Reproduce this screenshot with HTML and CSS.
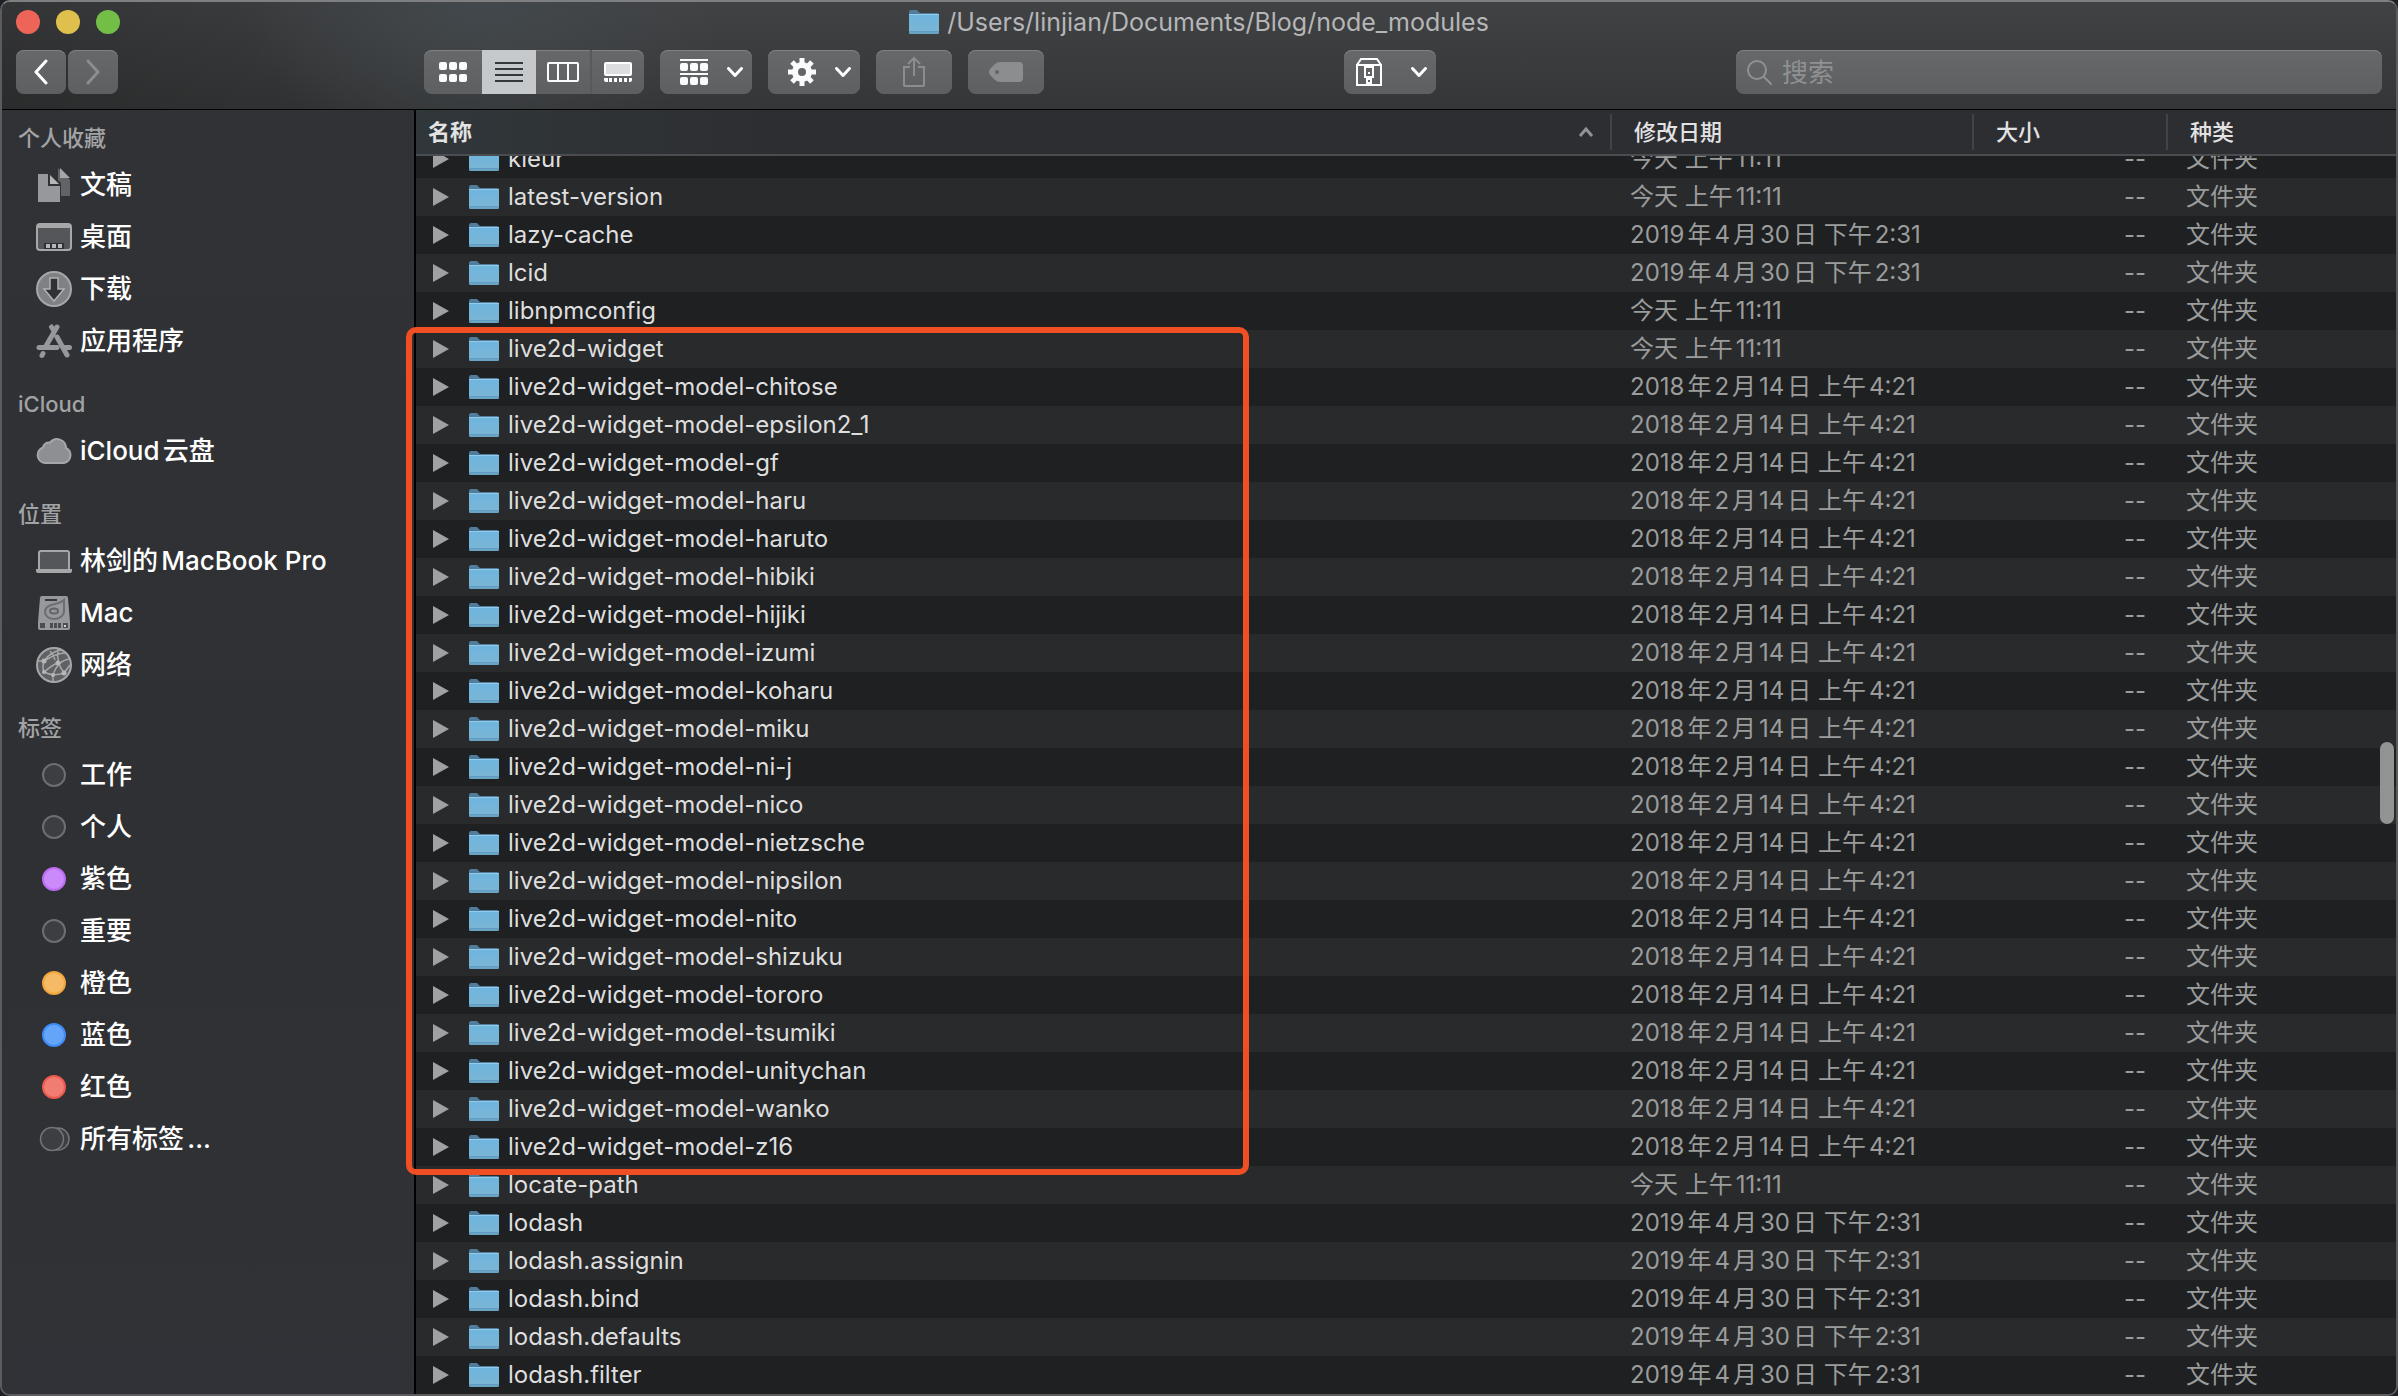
FILE: index.html
```html
<!DOCTYPE html>
<html lang="zh-CN">
<head>
<meta charset="utf-8">
<meta name="viewport" content="width=device-width, initial-scale=1">
<title>/Users/linjian/Documents/Blog/node_modules</title>
<link rel="stylesheet" href="styles.css">
</head>
<body>
<svg class="defs" aria-hidden="true">
  <defs>
    <linearGradient id="folder-front" x1="0" y1="0" x2="0" y2="1">
      <stop offset="0" stop-color="#6fb5de"/>
      <stop offset="1" stop-color="#7cb5d3"/>
    </linearGradient>
  </defs>
  <symbol id="folder" viewBox="0 0 30 24">
    <path d="M0 2q0-2 2-2h6l3 3h17q2 0 2 2v5H0z" fill="#4f7d9b"/>
    <path d="M0 5h30v17q0 2-2 2H2q-2 0-2-2z" fill="url(#folder-front)"/>
    <path d="M0 4h30v1H0z" fill="#93cbea"/>
    <path d="M0 21h30v1H0z" fill="#5f9cbf"/>
    <path d="M0 22h30q0 2-2 2H2q-2 0-2-2z" fill="#6aa5c6"/>
  </symbol>
  <symbol id="chevron" viewBox="0 0 16 10">
    <path d="M1.500 1.500 8 8.500l6.500-7" fill="none" stroke="currentColor" stroke-width="3" stroke-linecap="round" stroke-linejoin="round"/>
  </symbol>
</svg>

<div class="window">
  <header class="chrome">
    <div class="titlebar">
      <div class="lights">
        <button class="light close" aria-label="关闭"></button>
        <button class="light minimize" aria-label="最小化"></button>
        <button class="light zoom" aria-label="缩放"></button>
      </div>
      <h1 class="title"><svg class="folder"><use href="#folder"/></svg>/Users/linjian/Documents/Blog/node_modules</h1>
    </div>
    <div class="toolbar">
      <div class="history">
        <button class="tool nav" aria-label="后退"><svg width="16" height="26" viewBox="0 0 16 26"><path d="M13 2 3 13l10 11" fill="none" stroke="#fff" stroke-width="3" stroke-linecap="round" stroke-linejoin="round"/></svg></button>
        <button class="tool nav" aria-label="前进" disabled><svg width="16" height="26" viewBox="0 0 16 26"><path d="M3 2l10 11L3 24" fill="none" stroke="#8b8d8f" stroke-width="3" stroke-linecap="round" stroke-linejoin="round"/></svg></button>
      </div>
      <div class="views">
        <button class="view" aria-label="图标"><svg width="32" height="24" viewBox="0 0 32 24" fill="#fafbfc"><rect x="2" y="2" width="8" height="8" rx="2"/><rect x="12" y="2" width="8" height="8" rx="2"/><rect x="22" y="2" width="8" height="8" rx="2"/><rect x="2" y="14" width="8" height="8" rx="2"/><rect x="12" y="14" width="8" height="8" rx="2"/><rect x="22" y="14" width="8" height="8" rx="2"/></svg></button>
        <button class="view active" aria-label="列表" aria-pressed="true"><svg width="32" height="24" viewBox="0 0 32 24" fill="#36373a"><path d="M2 2h28v2H2zM2 8h28v2H2zM2 14h28v2H2zM2 20h28v2H2z"/></svg></button>
        <button class="view" aria-label="分栏"><svg width="32" height="24" viewBox="0 0 32 24" fill="none" stroke="#fafbfc" stroke-width="2"><rect x="1" y="3" width="30" height="18" rx="1"/><path d="M11 3v18M21 3v18"/></svg></button>
        <button class="view" aria-label="画廊"><svg width="32" height="24" viewBox="0 0 32 24"><rect x="3" y="3" width="26" height="12" rx="1" fill="#dcdddf" stroke="#fff" stroke-width="2"/><path d="M2 18h4v4H4q-2 0-2-2zM7 18h3v4H7zM12 18h3v4h-3zM17 18h3v4h-3zM22 18h3v4h-3zM27 18h3v2q0 2-2 2h-1z" fill="#fafbfc"/></svg></button>
      </div>
      <button class="tool menu" aria-label="分组"><svg width="28" height="26" viewBox="0 0 28 26" fill="#fafbfc"><path d="M0 0h28v2H0zM0 14h28v2H0z"/><rect y="4" width="8" height="8" rx="2"/><rect x="10" y="4" width="8" height="8" rx="2"/><rect x="20" y="4" width="8" height="8" rx="2"/><rect y="18" width="8" height="8" rx="2"/><rect x="10" y="18" width="8" height="8" rx="2"/><rect x="20" y="18" width="8" height="8" rx="2"/></svg><svg class="chevron"><use href="#chevron"/></svg></button>
      <button class="tool menu" aria-label="操作"><svg width="28" height="28" viewBox="0 0 28 28"><g stroke="#fafbfc" stroke-width="5"><path d="M14 0v28M0 14h28M4 4l20 20M24 4 4 24"/></g><circle cx="14" cy="14" r="7" fill="#646567" stroke="#fafbfc" stroke-width="6"/></svg><svg class="chevron"><use href="#chevron"/></svg></button>
      <button class="tool wide" aria-label="共享" disabled><svg width="24" height="32" viewBox="0 0 24 32" fill="none" stroke="#8b8d8f" stroke-width="2"><path d="M8 11H2v18q0 1 1 1h18q1 0 1-1V11h-6M12 20V2M6 8l6-6 6 6"/></svg></button>
      <button class="tool wide" aria-label="标签" disabled><svg width="34" height="20" viewBox="0 0 34 20"><path fill-rule="evenodd" d="M11 0h19q4 0 4 4v12q0 4-4 4H11q-3 0-5-2l-5-5q-2-3 0-6l5-5q2-2 5-2zM8 8a2 2 0 1 0 0 4 2 2 0 0 0 0-4z" fill="#8b8d8f"/></svg></button>
      <span class="spacer"></span>
      <button class="tool menu archive" aria-label="归档"><svg width="26" height="28" viewBox="0 0 26 28" fill="none" stroke="#fff" stroke-width="2"><path d="M1 7h24v20H1zM1 7l4-6h16l4 6M9 9h8v10H9zM11 19v8M15 19v8"/><path d="M12 14h2v2h-2zM12 20h2v2h-2zM12 24h2v2h-2z" fill="#fff" stroke="none"/></svg><svg class="chevron"><use href="#chevron"/></svg></button>
      <span class="spacer"></span>
      <label class="search"><svg width="26" height="26" viewBox="0 0 26 26" fill="none" stroke="#8f9193" stroke-width="2" stroke-linecap="round"><circle cx="11" cy="11" r="9"/><path d="m18 18 7 7"/></svg><input type="search" placeholder="搜索" aria-label="搜索"></label>
    </div>
  </header>

  <div class="content">
    <nav class="sidebar">
      <section>
        <h2>个人收藏</h2>
        <a href="#documents"><svg class="icon" viewBox="0 0 36 36"><path d="M12 1h10v12l3 3v13h9V13L22 1z" fill="#626366"/><path d="M24 1v10h10z" fill="#a6a7a9"/><path d="M2 7h10v12h12v16H2z" fill="#97989b"/><path d="M14 8v9h9z" fill="#b5b6b8"/></svg>文稿</a>
        <a href="#desktop"><svg class="icon" viewBox="0 0 36 36"><rect x="1" y="5" width="34" height="26" rx="3" fill="#55565a" stroke="#a6a7a9" stroke-width="2"/><path d="M1 6h34v3H1z" fill="#a6a7a9"/><path d="M8 24h20v6H8z" fill="#303134"/><path d="M10 25h4v4h-4zM16 25h4v4h-4zM22 25h4v4h-4z" fill="#b5b6b8"/></svg>桌面</a>
        <a href="#downloads"><svg class="icon" viewBox="0 0 36 36"><circle cx="18" cy="18" r="17" fill="#808184" stroke="#a6a7a9" stroke-width="2"/><path d="M14 7h8v11h6L18 30 8 18h6z" fill="#303134" stroke="#b0b1b3" stroke-width="1.500"/></svg>下载</a>
        <a href="#applications"><svg class="icon" viewBox="0 0 36 36" fill="none" stroke="#97989b" stroke-width="5" stroke-linecap="round"><path d="M15.500 4 18 8M21 4 10 23M3 24.500h18M21 14l10 18M7 30.500l-1 2M29 24.500h4.500"/></svg>应用程序</a>
      </section>
      <section>
        <h2>iCloud</h2>
        <a href="#icloud"><svg class="icon" viewBox="0 0 36 36"><path d="M9 30a8 8 0 0 1-2-15.500 6 6 0 0 1 7-5A9 9 0 0 1 30 15a8 8 0 0 1-2 15z" fill="#8e8f92" stroke="#a6a7a9" stroke-width="2"/></svg>iCloud云盘</a>
      </section>
      <section>
        <h2>位置</h2>
        <a href="#macbook"><svg class="icon" viewBox="0 0 36 36"><rect x="3" y="8" width="30" height="20" rx="2" fill="#55565a" stroke="#a6a7a9" stroke-width="2"/><path d="M0 26h36v2q0 2-2 2H2q-2 0-2-2z" fill="#a6a7a9"/></svg>林剑的MacBook Pro</a>
        <a href="#mac"><svg class="icon" viewBox="0 0 36 36"><path d="M6 1h24q2 0 2 2l2 24v6q0 2-2 2H4q-2 0-2-2v-6L4 3q0-2 2-2z" fill="#97989b"/><path d="M9 4h12v2H9z" fill="#38393c"/><path d="M28 5c-2 2-5 3-9 4-7 1-10 4-10 8s4 7 9 7 10-3 10-8z" fill="none" stroke="#6d6e71" stroke-width="2"/><ellipse cx="18" cy="16" rx="4" ry="2.500" fill="#97989b" stroke="#626366" stroke-width="2"/><path d="M4 28h28v5H4z" fill="#4c4d50"/><path d="M9 28h5v5H9zM17 28h1v5h-1zM21 28h1v5h-1zM25 28h2v5h-2z" fill="#97989b"/><path d="M28 30h2v2h-2z" fill="#d0d1d3"/></svg>Mac</a>
        <a href="#network"><svg class="icon" viewBox="0 0 36 36" fill="none" stroke="#a6a7a9" stroke-width="1.500"><circle cx="18" cy="18" r="17" fill="#606164" stroke-width="2"/><path d="M8 14Q14 5 25 3M8 14q-2 6 0 11 9 5 20 1l6-8M8 14q13-8 21-8M22 2q-2 14 6 24M14 4q4 4 5 9M34 12q-12 1-17 16v7M21 16q-6 3-13 9M2 14l6 0"/><g fill="#b5b6b8" stroke="none"><circle cx="8" cy="14" r="2.500"/><circle cx="22" cy="16" r="2.500"/><circle cx="8" cy="25" r="2"/><circle cx="17" cy="28" r="2"/><circle cx="28" cy="26" r="2.500"/></g></svg>网络</a>
      </section>
      <section>
        <h2>标签</h2>
        <a href="#tag-work"><span class="tag"></span>工作</a>
        <a href="#tag-personal"><span class="tag"></span>个人</a>
        <a href="#tag-purple"><span class="tag purple"></span>紫色</a>
        <a href="#tag-important"><span class="tag"></span>重要</a>
        <a href="#tag-orange"><span class="tag orange"></span>橙色</a>
        <a href="#tag-blue"><span class="tag blue"></span>蓝色</a>
        <a href="#tag-red"><span class="tag red"></span>红色</a>
        <a href="#tags"><svg class="icon" viewBox="0 0 36 36" fill="#3d3e42" stroke="#747579" stroke-width="1.500"><circle cx="22" cy="18" r="11"/><circle cx="16" cy="18" r="11.500"/></svg>所有标签...</a>
      </section>
    </nav>

    <main class="browser">
      <table class="files">
        <thead>
          <tr><th class="name" scope="col">名称<svg class="sort" width="16" height="12" viewBox="0 0 16 12"><path d="m2 10 6-7 6 7" fill="none" stroke="#929396" stroke-width="3"/></svg></th><th scope="col">修改日期</th><th scope="col">大小</th><th scope="col">种类</th></tr>
        </thead>
        <tbody>
          <tr><td class="name"><button class="toggle" aria-label="展开"></button><svg class="folder"><use href="#folder"/></svg>kleur</td><td>今天 上午11:11</td><td class="size">--</td><td>文件夹</td></tr>
          <tr><td class="name"><button class="toggle" aria-label="展开"></button><svg class="folder"><use href="#folder"/></svg>latest-version</td><td>今天 上午11:11</td><td class="size">--</td><td>文件夹</td></tr>
          <tr><td class="name"><button class="toggle" aria-label="展开"></button><svg class="folder"><use href="#folder"/></svg>lazy-cache</td><td>2019年4月30日 下午2:31</td><td class="size">--</td><td>文件夹</td></tr>
          <tr><td class="name"><button class="toggle" aria-label="展开"></button><svg class="folder"><use href="#folder"/></svg>lcid</td><td>2019年4月30日 下午2:31</td><td class="size">--</td><td>文件夹</td></tr>
          <tr><td class="name"><button class="toggle" aria-label="展开"></button><svg class="folder"><use href="#folder"/></svg>libnpmconfig</td><td>今天 上午11:11</td><td class="size">--</td><td>文件夹</td></tr>
          <tr><td class="name"><button class="toggle" aria-label="展开"></button><svg class="folder"><use href="#folder"/></svg>live2d-widget</td><td>今天 上午11:11</td><td class="size">--</td><td>文件夹</td></tr>
          <tr><td class="name"><button class="toggle" aria-label="展开"></button><svg class="folder"><use href="#folder"/></svg>live2d-widget-model-chitose</td><td>2018年2月14日 上午4:21</td><td class="size">--</td><td>文件夹</td></tr>
          <tr><td class="name"><button class="toggle" aria-label="展开"></button><svg class="folder"><use href="#folder"/></svg>live2d-widget-model-epsilon2_1</td><td>2018年2月14日 上午4:21</td><td class="size">--</td><td>文件夹</td></tr>
          <tr><td class="name"><button class="toggle" aria-label="展开"></button><svg class="folder"><use href="#folder"/></svg>live2d-widget-model-gf</td><td>2018年2月14日 上午4:21</td><td class="size">--</td><td>文件夹</td></tr>
          <tr><td class="name"><button class="toggle" aria-label="展开"></button><svg class="folder"><use href="#folder"/></svg>live2d-widget-model-haru</td><td>2018年2月14日 上午4:21</td><td class="size">--</td><td>文件夹</td></tr>
          <tr><td class="name"><button class="toggle" aria-label="展开"></button><svg class="folder"><use href="#folder"/></svg>live2d-widget-model-haruto</td><td>2018年2月14日 上午4:21</td><td class="size">--</td><td>文件夹</td></tr>
          <tr><td class="name"><button class="toggle" aria-label="展开"></button><svg class="folder"><use href="#folder"/></svg>live2d-widget-model-hibiki</td><td>2018年2月14日 上午4:21</td><td class="size">--</td><td>文件夹</td></tr>
          <tr><td class="name"><button class="toggle" aria-label="展开"></button><svg class="folder"><use href="#folder"/></svg>live2d-widget-model-hijiki</td><td>2018年2月14日 上午4:21</td><td class="size">--</td><td>文件夹</td></tr>
          <tr><td class="name"><button class="toggle" aria-label="展开"></button><svg class="folder"><use href="#folder"/></svg>live2d-widget-model-izumi</td><td>2018年2月14日 上午4:21</td><td class="size">--</td><td>文件夹</td></tr>
          <tr><td class="name"><button class="toggle" aria-label="展开"></button><svg class="folder"><use href="#folder"/></svg>live2d-widget-model-koharu</td><td>2018年2月14日 上午4:21</td><td class="size">--</td><td>文件夹</td></tr>
          <tr><td class="name"><button class="toggle" aria-label="展开"></button><svg class="folder"><use href="#folder"/></svg>live2d-widget-model-miku</td><td>2018年2月14日 上午4:21</td><td class="size">--</td><td>文件夹</td></tr>
          <tr><td class="name"><button class="toggle" aria-label="展开"></button><svg class="folder"><use href="#folder"/></svg>live2d-widget-model-ni-j</td><td>2018年2月14日 上午4:21</td><td class="size">--</td><td>文件夹</td></tr>
          <tr><td class="name"><button class="toggle" aria-label="展开"></button><svg class="folder"><use href="#folder"/></svg>live2d-widget-model-nico</td><td>2018年2月14日 上午4:21</td><td class="size">--</td><td>文件夹</td></tr>
          <tr><td class="name"><button class="toggle" aria-label="展开"></button><svg class="folder"><use href="#folder"/></svg>live2d-widget-model-nietzsche</td><td>2018年2月14日 上午4:21</td><td class="size">--</td><td>文件夹</td></tr>
          <tr><td class="name"><button class="toggle" aria-label="展开"></button><svg class="folder"><use href="#folder"/></svg>live2d-widget-model-nipsilon</td><td>2018年2月14日 上午4:21</td><td class="size">--</td><td>文件夹</td></tr>
          <tr><td class="name"><button class="toggle" aria-label="展开"></button><svg class="folder"><use href="#folder"/></svg>live2d-widget-model-nito</td><td>2018年2月14日 上午4:21</td><td class="size">--</td><td>文件夹</td></tr>
          <tr><td class="name"><button class="toggle" aria-label="展开"></button><svg class="folder"><use href="#folder"/></svg>live2d-widget-model-shizuku</td><td>2018年2月14日 上午4:21</td><td class="size">--</td><td>文件夹</td></tr>
          <tr><td class="name"><button class="toggle" aria-label="展开"></button><svg class="folder"><use href="#folder"/></svg>live2d-widget-model-tororo</td><td>2018年2月14日 上午4:21</td><td class="size">--</td><td>文件夹</td></tr>
          <tr><td class="name"><button class="toggle" aria-label="展开"></button><svg class="folder"><use href="#folder"/></svg>live2d-widget-model-tsumiki</td><td>2018年2月14日 上午4:21</td><td class="size">--</td><td>文件夹</td></tr>
          <tr><td class="name"><button class="toggle" aria-label="展开"></button><svg class="folder"><use href="#folder"/></svg>live2d-widget-model-unitychan</td><td>2018年2月14日 上午4:21</td><td class="size">--</td><td>文件夹</td></tr>
          <tr><td class="name"><button class="toggle" aria-label="展开"></button><svg class="folder"><use href="#folder"/></svg>live2d-widget-model-wanko</td><td>2018年2月14日 上午4:21</td><td class="size">--</td><td>文件夹</td></tr>
          <tr><td class="name"><button class="toggle" aria-label="展开"></button><svg class="folder"><use href="#folder"/></svg>live2d-widget-model-z16</td><td>2018年2月14日 上午4:21</td><td class="size">--</td><td>文件夹</td></tr>
          <tr><td class="name"><button class="toggle" aria-label="展开"></button><svg class="folder"><use href="#folder"/></svg>locate-path</td><td>今天 上午11:11</td><td class="size">--</td><td>文件夹</td></tr>
          <tr><td class="name"><button class="toggle" aria-label="展开"></button><svg class="folder"><use href="#folder"/></svg>lodash</td><td>2019年4月30日 下午2:31</td><td class="size">--</td><td>文件夹</td></tr>
          <tr><td class="name"><button class="toggle" aria-label="展开"></button><svg class="folder"><use href="#folder"/></svg>lodash.assignin</td><td>2019年4月30日 下午2:31</td><td class="size">--</td><td>文件夹</td></tr>
          <tr><td class="name"><button class="toggle" aria-label="展开"></button><svg class="folder"><use href="#folder"/></svg>lodash.bind</td><td>2019年4月30日 下午2:31</td><td class="size">--</td><td>文件夹</td></tr>
          <tr><td class="name"><button class="toggle" aria-label="展开"></button><svg class="folder"><use href="#folder"/></svg>lodash.defaults</td><td>2019年4月30日 下午2:31</td><td class="size">--</td><td>文件夹</td></tr>
          <tr><td class="name"><button class="toggle" aria-label="展开"></button><svg class="folder"><use href="#folder"/></svg>lodash.filter</td><td>2019年4月30日 下午2:31</td><td class="size">--</td><td>文件夹</td></tr>
        </tbody>
      </table>
      <div class="marker"></div>
      <div class="scroll-thumb"></div>
    </main>
  </div>
</div>
</body>
</html>
```

FILE: styles.css
```css
* {
  box-sizing: border-box;
}

body {
  margin: 0;
  background: #1d2027;
  color: #fff;
  font-family: Inter, "Noto Sans CJK SC", sans-serif;
  font-size: 24px;
  text-autospace: normal;
}

button {
  padding: 0;
  border: 0;
  background: none;
  color: inherit;
  font: inherit;
}

.defs {
  position: absolute;
  width: 0;
  height: 0;
}

.folder {
  flex: none;
  width: 30px;
  height: 24px;
}

.window {
  display: flex;
  flex-direction: column;
  min-height: 100vh;
  border: 2px solid #5b5c5e;
  border-top-color: #7d7f81;
  border-radius: 10px;
  overflow: hidden;
  background: #303134;
}

/* Title bar and toolbar */

.chrome {
  border-bottom: 1px solid #000;
  background:
    radial-gradient(ellipse 240px 160px at 480px 0, #42484c, transparent),
    linear-gradient(90deg, #0003, transparent 560px),
    linear-gradient(#414244, #353637);
}

.titlebar {
  display: grid;
  grid-template-columns: 1fr auto 1fr;
  align-items: center;
  height: 40px;
  padding: 0 14px;
}

.lights {
  display: flex;
  gap: 16px;
}

.light {
  width: 24px;
  height: 24px;
  border-radius: 50%;
}

.close { background: #ed6559; }
.minimize { background: #e0c04c; }
.zoom { background: #72be47; }

.title {
  display: flex;
  align-items: center;
  gap: 8px;
  margin: 0;
  color: #b5b6b7;
  font-size: 25px;
  font-weight: 400;
  line-height: 32px;
}

.toolbar {
  display: flex;
  gap: 16px;
  padding: 8px 14px 15px;
}

.history {
  display: flex;
  gap: 2px;
  width: 392px;
}

.tool,
.views,
.search {
  height: 44px;
  border-radius: 8px;
  background: linear-gradient(#66686a, #5e5f61);
  box-shadow: inset 0 1px #808183;
}

.tool {
  display: flex;
  align-items: center;
  justify-content: center;
}

.nav {
  width: 50px;
}

.menu {
  justify-content: space-between;
  width: 92px;
  padding: 0 9px 0 20px;
}

.archive {
  padding-left: 12px;
}

.wide {
  width: 76px;
}

.chevron {
  width: 16px;
  height: 10px;
}

.views {
  display: grid;
  grid-template-columns: 58px 54px 54px 54px;
  overflow: hidden;
}

.view {
  display: flex;
  align-items: center;
  justify-content: center;
}

.view.active {
  background: #c6c9cb;
}

.view:last-child {
  border-left: 2px solid #58595b;
}

.spacer {
  flex: 1;
}

.search {
  display: flex;
  align-items: center;
  gap: 10px;
  width: 646px;
  padding: 0 10px;
}

.search input {
  flex: 1;
  min-width: 0;
  padding: 0;
  border: 0;
  outline: 0;
  background: none;
  color: #fff;
  font: inherit;
  font-size: 26px;
}

.search input::placeholder {
  color: #8f9193;
}

/* Sidebar */

.content {
  display: flex;
  flex: 1;
}

.sidebar {
  flex: none;
  width: 414px;
  padding-top: 7px;
  border-right: 2px solid #000;
  background: linear-gradient(#313235, #2f3033 60%, #313237);
}

.sidebar section {
  margin-bottom: 16px;
}

.sidebar h2 {
  margin: 0;
  padding-left: 16px;
  color: #a2a3a5;
  font-size: 22px;
  font-weight: 500;
  line-height: 42px;
}

.sidebar a {
  display: flex;
  align-items: center;
  gap: 8px;
  height: 52px;
  padding-left: 34px;
  color: #fff;
  font-size: 26px;
  font-weight: 500;
  line-height: 52px;
  text-decoration: none;
}

.icon {
  flex: none;
  width: 36px;
  height: 36px;
}

.tag {
  width: 24px;
  height: 24px;
  margin: 0 6px;
  border: 2px solid #6d6e71;
  border-radius: 50%;
  background: #3d3e42;
}

.purple { border-color: #bb6cf2; background: #cb8af9; }
.orange { border-color: #f1a63c; background: #f5ba66; }
.blue { border-color: #3e8cf7; background: #65a5f9; }
.red { border-color: #ec5a4f; background: #f07c72; }

/* File list */

.browser {
  position: relative;
  flex: 1;
  min-width: 0;
}

.files,
.files thead,
.files tbody {
  display: block;
}

.files tr {
  display: grid;
  grid-template-columns: minmax(0, 1fr) 362px 194px 230px;
}

.files thead {
  padding: 4px 0;
  border-bottom: 2px solid #4b4c4f;
  background: linear-gradient(90deg, #30373a, #2d2e32 360px);
}

.files th {
  padding: 0 0 0 22px;
  border-left: 2px solid #434447;
  color: #e2e2e3;
  font-size: 22px;
  font-weight: 500;
  line-height: 36px;
  text-align: left;
}

.files th.name {
  display: flex;
  align-items: center;
  justify-content: space-between;
  padding: 0 16px 0 12px;
  border-left: 0;
  font-weight: 700;
}

.files tbody {
  overflow: hidden;
}

.files tbody tr {
  height: 38px;
  background: #1e2021;
}

.files tbody tr:nth-child(even) {
  background: #292a2b;
}

/* The list is scrolled part of a row down. */
.files tbody tr:first-child {
  margin-top: -16px;
}

.files td {
  padding: 0 0 0 20px;
  color: #9b9c9c;
  line-height: 38px;
  white-space: nowrap;
}

.files td.name {
  display: flex;
  align-items: center;
  padding-left: 17px;
  color: #dededf;
}

.files td.size {
  padding: 0 20px 0 0;
  text-align: right;
}

.name .folder {
  margin: 0 9px 0 20px;
}

.toggle {
  width: 16px;
  height: 18px;
  background: #a0a1a2;
  clip-path: polygon(0 0, 100% 50%, 0 100%);
}

.marker {
  position: absolute;
  top: 217px;
  left: -10px;
  width: 843px;
  height: 848px;
  border: 6px solid #f04e23;
  border-radius: 10px;
  pointer-events: none;
}

.scroll-thumb {
  position: absolute;
  top: 632px;
  right: 2px;
  width: 14px;
  height: 82px;
  border-radius: 7px;
  background: #929393;
}
```
